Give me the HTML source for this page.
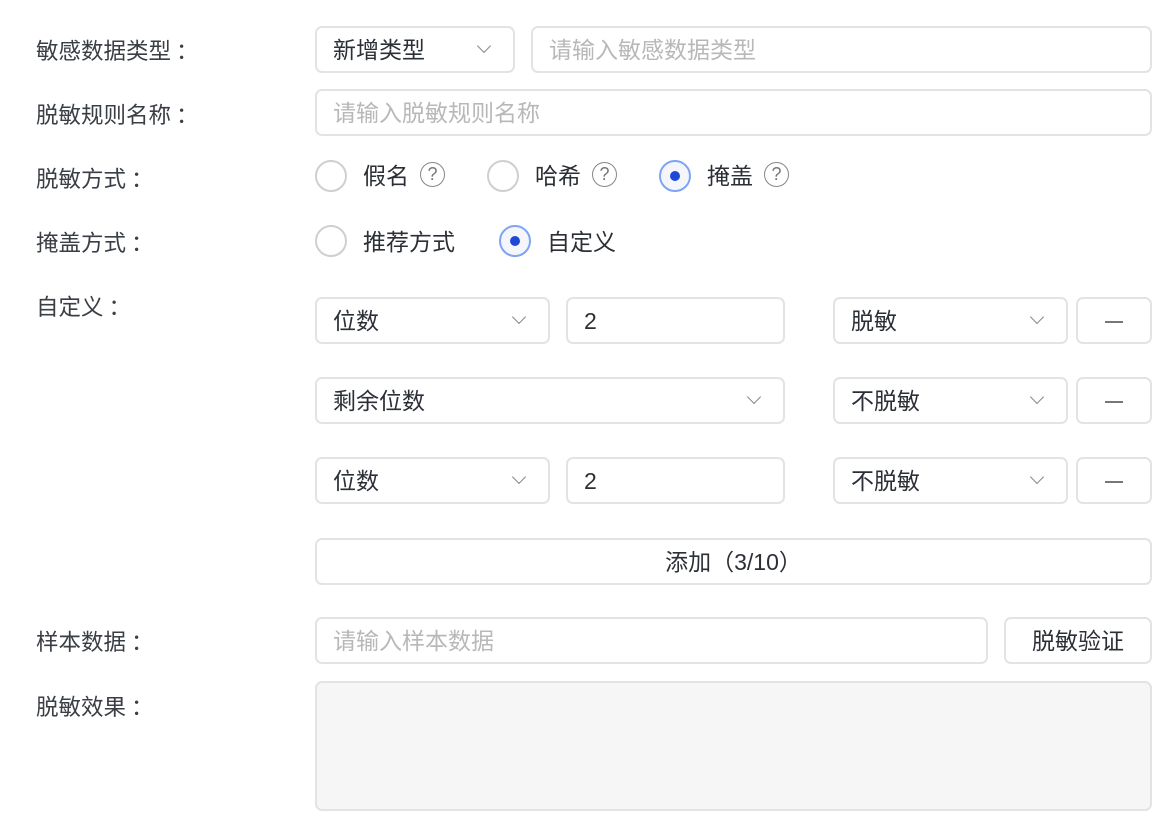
<!DOCTYPE html>
<html><head><meta charset="utf-8"><style>
*{box-sizing:border-box;margin:0;padding:0}
body{width:1168px;height:822px;background:#fff;position:relative;overflow:hidden;font-family:"Liberation Sans","Noto Sans CJK SC",sans-serif;font-size:23px;color:#2b2f36}
.lbl{position:absolute;left:36px;line-height:30px;color:#3a3e45;font-family:"Noto Sans CJK SC",sans-serif;font-size:22.5px}
.box{position:absolute;border:2px solid #e3e3e3;border-radius:7px;height:47px;line-height:45px;padding-left:16px;background:#fff}
.ph{color:#b8b8b8}
.chev{position:absolute;right:24px;top:13px;width:10px;height:10px;border-right:1.6px solid #888;border-bottom:1.6px solid #888;transform:rotate(45deg)}
.radio{position:absolute;width:32px;height:32px;border:2px solid #cfcfcf;border-radius:50%;background:#fff}
.radio.on{border-color:#7fa3f7;background:#f4f6fb}
.radio.on::after{content:"";position:absolute;left:9px;top:9px;width:10px;height:10px;border-radius:50%;background:#1f48d6}
.q{position:absolute;width:25px;height:25px;border:1.6px solid #888;border-radius:50%;font-size:18px;line-height:23px;text-align:center;color:#777}
.rt{position:absolute;line-height:30px}
.minus{position:absolute;width:18px;height:1.5px;background:#777}
.btn{text-align:center;padding:0}
</style></head><body>
<div class="lbl" style="top:35px">敏感数据类型 ：</div>
<div class="lbl" style="top:99px">脱敏规则名称 ：</div>
<div class="lbl" style="top:163px">脱敏方式 ：</div>
<div class="lbl" style="top:227px">掩盖方式 ：</div>
<div class="lbl" style="top:291px">自定义 ：</div>
<div class="lbl" style="top:626px">样本数据 ：</div>
<div class="lbl" style="top:691px">脱敏效果 ：</div>

<div class="box" style="left:315px;top:26px;width:200px">新增类型<span class="chev"></span></div>
<div class="box ph" style="left:531px;top:26px;width:621px">请输入敏感数据类型</div>
<div class="box ph" style="left:315px;top:89px;width:837px">请输入脱敏规则名称</div>

<div class="radio" style="left:315px;top:160px"></div><div class="rt" style="left:363px;top:161px">假名</div><div class="q" style="left:420px;top:162px">?</div>
<div class="radio" style="left:487px;top:160px"></div><div class="rt" style="left:535px;top:161px">哈希</div><div class="q" style="left:592px;top:162px">?</div>
<div class="radio on" style="left:659px;top:160px"></div><div class="rt" style="left:707px;top:161px">掩盖</div><div class="q" style="left:764px;top:162px">?</div>

<div class="radio" style="left:315px;top:225px"></div><div class="rt" style="left:363px;top:227px">推荐方式</div>
<div class="radio on" style="left:499px;top:225px"></div><div class="rt" style="left:547px;top:227px">自定义</div>

<div class="box" style="left:315px;top:297px;width:235px">位数<span class="chev"></span></div>
<div class="box" style="left:566px;top:297px;width:219px">2</div>
<div class="box" style="left:833px;top:297px;width:235px">脱敏<span class="chev"></span></div>
<div class="box" style="left:1076px;top:297px;width:76px"><span class="minus" style="left:27px;top:22px"></span></div>

<div class="box" style="left:315px;top:377px;width:470px">剩余位数<span class="chev"></span></div>
<div class="box" style="left:833px;top:377px;width:235px">不脱敏<span class="chev"></span></div>
<div class="box" style="left:1076px;top:377px;width:76px"><span class="minus" style="left:27px;top:22px"></span></div>

<div class="box" style="left:315px;top:457px;width:235px">位数<span class="chev"></span></div>
<div class="box" style="left:566px;top:457px;width:219px">2</div>
<div class="box" style="left:833px;top:457px;width:235px">不脱敏<span class="chev"></span></div>
<div class="box" style="left:1076px;top:457px;width:76px"><span class="minus" style="left:27px;top:22px"></span></div>

<div class="box btn" style="left:315px;top:538px;width:837px">添加（3/10）</div>

<div class="box ph" style="left:315px;top:617px;width:673px">请输入样本数据</div>
<div class="box btn" style="left:1004px;top:617px;width:148px">脱敏验证</div>

<div class="box" style="left:315px;top:681px;width:837px;height:130px;background:#f6f6f6"></div>
</body></html>
